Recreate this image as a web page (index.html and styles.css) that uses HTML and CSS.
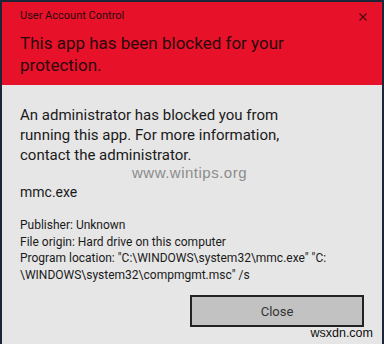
FILE: index.html
```html
<!DOCTYPE html>
<html lang="en">
<head>
  <meta charset="UTF-8">
  <title>User Account Control</title>
  <link rel="stylesheet" href="styles.css">
</head>
<body>
  <div class="uac">
    <div class="head">
      <div class="title-bar">
        <span class="title">User Account Control</span>
        <svg class="close-x" width="8" height="8" viewBox="0 0 8 8">
          <path d="M0.5 0.5 L7.5 7.5 M7.5 0.5 L0.5 7.5" stroke="#4a0a12" stroke-width="1.1" fill="none"/>
        </svg>
      </div>
      <h1 class="headline">This app has been blocked for your protection.</h1>
    </div>
    <div class="content">
      <p class="message">An administrator has blocked you from running this app. For more information, contact the administrator.</p>
      <p class="app-name">mmc.exe</p>
      <ul class="details">
        <li>Publisher: Unknown</li>
        <li>File origin: Hard drive on this computer</li>
        <li>Program location: "C:\WINDOWS\system32\mmc.exe" "C:<br>\WINDOWS\system32\compmgmt.msc" /s</li>
      </ul>
      <div class="actions">
        <button class="btn">Close</button>
      </div>
    </div>
    <!-- watermarks over the dialog -->
    <div class="mark">www.wintips.org</div>
    <div class="site">wsxdn.com</div>
  </div>
</body>
</html>
```

FILE: styles.css
```css
* {
  margin: 0;
  padding: 0;
  box-sizing: border-box;
}

body {
  width: 384px;
  height: 344px;
  overflow: hidden;
  background: #e6e6e6;
  font-family: Roboto, "Noto Sans", sans-serif;
}

.uac {
  width: 384px;
  height: 344px;
  border: 2px solid #1d2538;
  border-bottom: 0;
  display: flex;
  flex-direction: column;
  position: relative;
}

.head {
  background: #e8112a;
  color: #2b080c;
  height: 83px;
  padding: 7px 15px 0 18px;
}

.title-bar {
  display: flex;
  justify-content: space-between;
  align-items: center;
  height: 13px;
}

.title {
  font-size: 11px;
  line-height: 13px;
}

.close-x {
  display: block;
  margin-top: 3px;
}

.headline {
  font-size: 17px;
  font-weight: normal;
  line-height: 22px;
  margin-top: 10px;
  width: 300px;
}

.content {
  flex: 1;
  padding: 20px 18px 0 18px;
  color: #1a1a1a;
}

.message {
  font-size: 15px;
  line-height: 20px;
  width: 290px;
}

.app-name {
  font-size: 14px;
  line-height: 20px;
  margin-top: 17px;
}

.details {
  list-style: none;
  margin-top: 15px;
  font-size: 12px;
  line-height: 16.5px;
}

.actions {
  display: flex;
  justify-content: flex-end;
  margin-top: 12px;
}

.btn {
  width: 174px;
  height: 32px;
  background: #c2c2c2;
  border: 2px solid #222;
  font-family: inherit;
  font-size: 13px;
  color: #333;
}

.mark {
  position: absolute;
  left: 130px;
  top: 165.5px;
  font-family: "Liberation Sans", Arial, sans-serif;
  font-size: 15px;
  letter-spacing: 0.5px;
  line-height: 10px;
  color: #8c8c8c;
}

.site {
  position: absolute;
  right: 9px;
  top: 324px;
  font-family: "Liberation Sans", Arial, sans-serif;
  font-size: 12.5px;
  line-height: 14px;
  color: #111;
}
```
